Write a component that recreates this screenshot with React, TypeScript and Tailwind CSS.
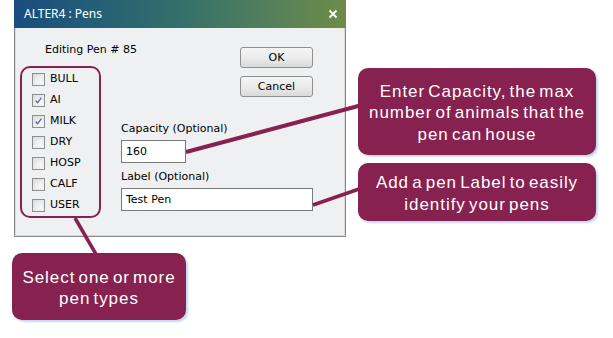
const types = [
  { name: "BULL", checked: false },
  { name: "AI", checked: true },
  { name: "MILK", checked: true },
  { name: "DRY", checked: false },
  { name: "HOSP", checked: false },
  { name: "CALF", checked: false },
  { name: "USER", checked: false },
]

const Check = ({ checked }: { checked: boolean }) => (
  <span className="flex items-center justify-center w-[13px] h-[13px] border border-[#8f8f8f] bg-gradient-to-br from-[#dcdcdc] to-[#f7f7f7] p-[2px]">
    <span className="flex items-center justify-center w-full h-full bg-gradient-to-br from-[#e4e4e4] to-[#fbfbfb]">
      {checked && (
        <svg width="9" height="9" viewBox="0 0 9 9">
          <path d="M0.8 4.6 L3.3 7.4 L8.2 0.8" fill="none" stroke="#4d64a0" strokeWidth="1.6" />
        </svg>
      )}
    </span>
  </span>
)

const Button = ({ label }: { label: string }) => (
  <button className="w-[73px] h-[21px] rounded-[3px] border border-[#8e8f8f] bg-gradient-to-b from-[#f5f5f5] via-[#ececec] to-[#d9d9d9] text-[11px] leading-none text-black">
    {label}
  </button>
)

const Callout = ({ lines, className }: { lines: string[], className: string }) => (
  <div className={"absolute flex flex-col items-center justify-center pt-[3px] rounded-[10px] bg-[#87214f] text-white text-[17px] leading-[21.3px] tracking-[0.95px] [word-spacing:-2.5px] [font-family:Liberation_Sans,Arial,sans-serif] shadow-[2px_2px_2px_rgba(170,200,235,0.7)] " + className}>
    {lines.map((line, index) => <span key={index} className="whitespace-nowrap">{line}</span>)}
  </div>
)

export default function App() {
  return (
    <div className="relative w-[613px] h-[338px] bg-white overflow-hidden">
      <div className="ml-[14px] w-[332px] flex flex-col [font-family:DejaVu_Sans,Verdana,sans-serif] text-black">
        <div className="h-[28px] flex items-center justify-between pl-[10px] pr-[8px] bg-gradient-to-r from-[#1a4c7e] via-[#33706a] to-[#6e8c47] text-white">
          <span className="text-[12px] [font-family:Noto_Sans,sans-serif]">ALTER4 : Pens</span>
          <svg width="10" height="10" viewBox="0 0 10 10">
            <path d="M1.5 1.5 L8.5 8.5 M8.5 1.5 L1.5 8.5" stroke="white" strokeWidth="1.8" />
          </svg>
        </div>
        <div className="h-[209px] flex border border-t-0 border-[#8a8a8a] bg-[#eff0f2] shadow-[inset_1px_0_0_#d8d8d8,inset_-1px_-1px_0_#d8d8d8] pl-[5px]">
          <div className="w-[81px] flex flex-col">
            <div className="mt-[15px] ml-[25px] h-[14px] text-[11px] leading-[14px] whitespace-nowrap">Editing Pen # 85</div>
            <div className="mt-[9px] h-[152px] rounded-[10px] border-2 border-[#87214f] flex flex-col pt-[1px] pl-[10px]">
              {types.map((item) => (
                <div key={item.name} className="h-[21.3px] flex items-center gap-[5px] text-[11px]">
                  <Check checked={item.checked} />
                  <span>{item.name}</span>
                </div>
              ))}
            </div>
          </div>
          <div className="ml-[20px] pt-[19px] flex flex-col">
            <div className="ml-[119px] flex flex-col gap-[8px]">
              <Button label="OK" />
              <Button label="Cancel" />
            </div>
            <div className="mt-[25px] h-[14px] text-[11px] leading-[14px]">Capacity (Optional)</div>
            <div className="mt-[4px] w-[65px] h-[23px] border border-[#7a7a7a] bg-white pl-[4px] text-[11px] leading-[21px]">160</div>
            <div className="mt-[7px] h-[14px] text-[11px] leading-[14px]">Label (Optional)</div>
            <div className="mt-[4px] w-[192px] h-[23px] border border-[#7a7a7a] bg-white pl-[4px] text-[11px] leading-[21px]">Test Pen</div>
          </div>
        </div>
      </div>

      <svg className="absolute inset-0 pointer-events-none" width="613" height="338">
        <line x1="186" y1="152" x2="362" y2="105" stroke="#87214f" strokeWidth="4" />
        <line x1="313" y1="205" x2="362" y2="188" stroke="#87214f" strokeWidth="3.5" />
        <line x1="75" y1="218" x2="97" y2="256" stroke="#87214f" strokeWidth="3.5" />
      </svg>

      <Callout className="left-[358px] top-[68px] w-[238px] h-[87px]" lines={["Enter Capacity, the max", "number of animals that the", "pen can house"]} />
      <Callout className="left-[358px] top-[163px] w-[238px] h-[58px]" lines={["Add a pen Label to easily", "identify your pens"]} />
      <Callout className="left-[12px] top-[253px] w-[174px] h-[67px]" lines={["Select one or more", "pen types"]} />
    </div>
  )
}
